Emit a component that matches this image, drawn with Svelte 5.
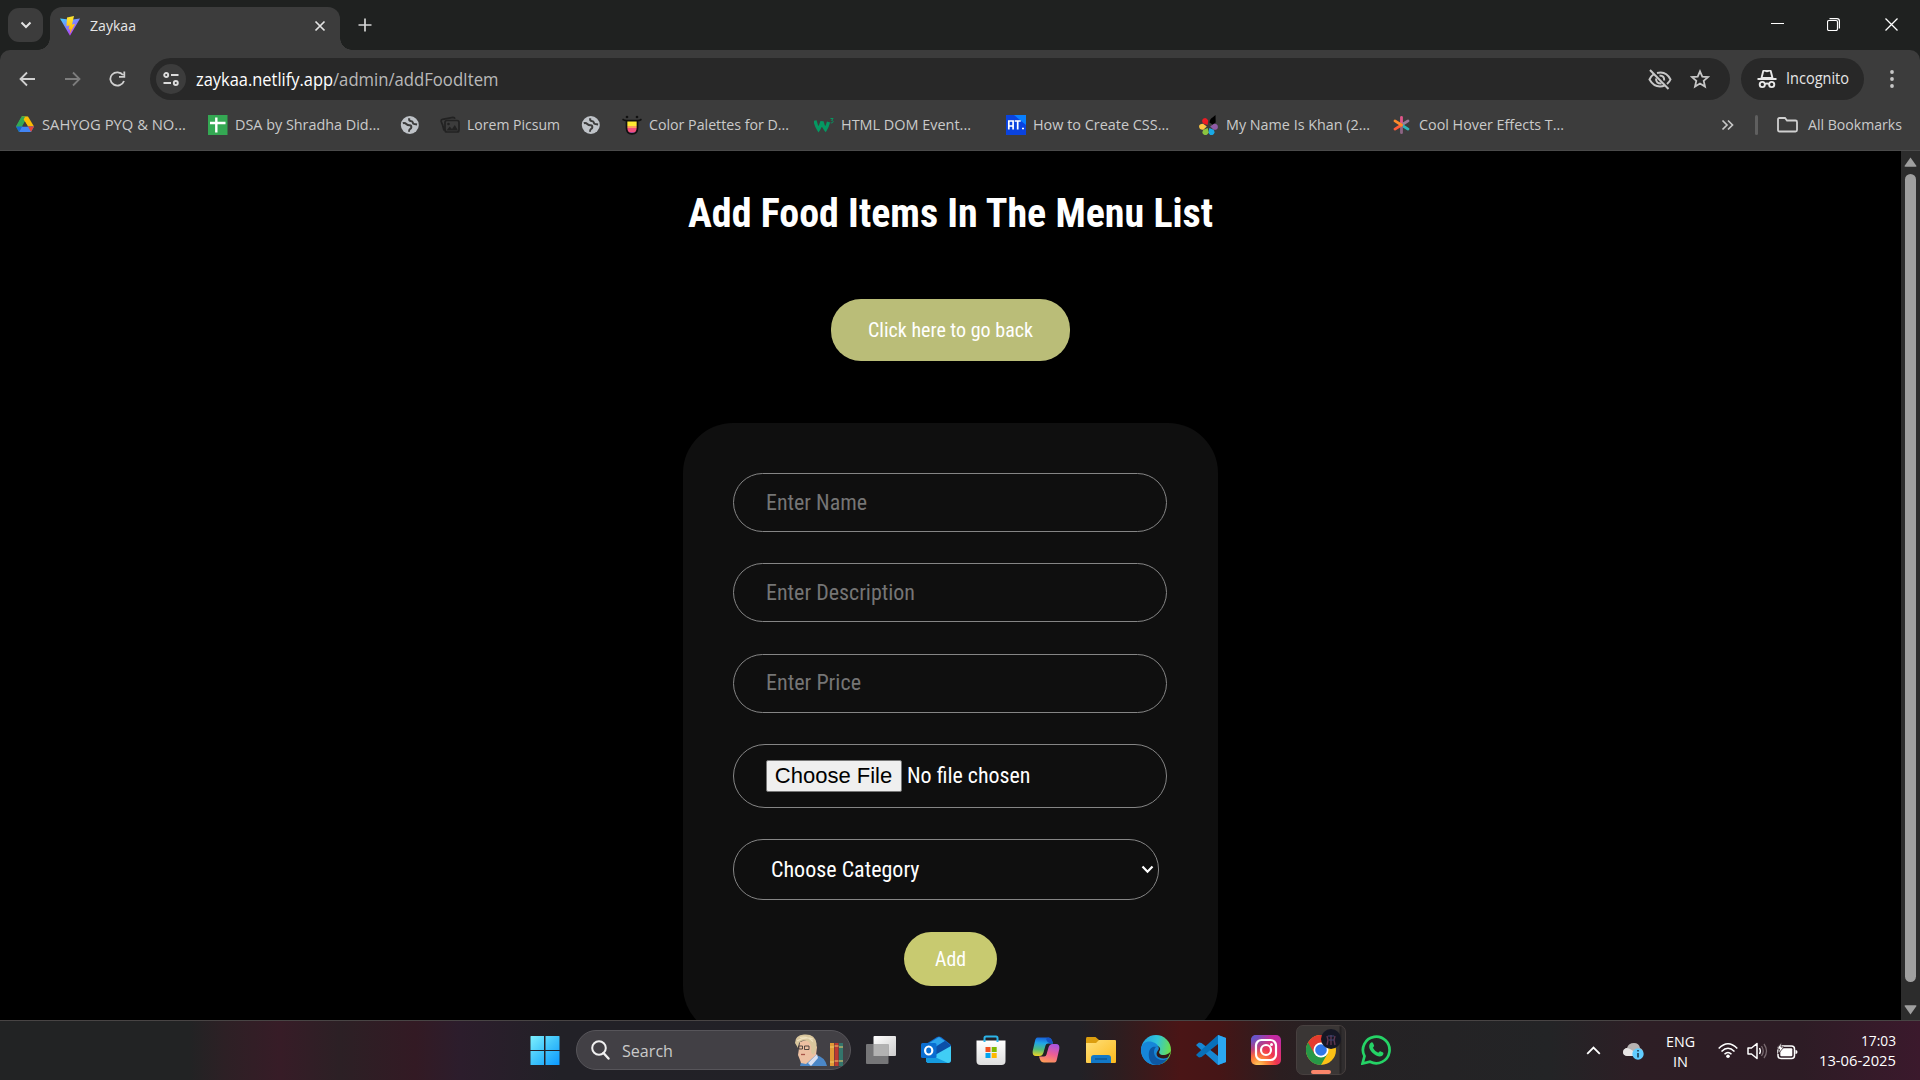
<script>
  const bookmarks = [
    { icon: 'drive', label: 'SAHYOG PYQ & NO...', w: 144 },
    { icon: 'sheet', label: 'DSA by Shradha Did...', w: 145 },
    { icon: 'globe' },
    { icon: 'picsum', label: 'Lorem Picsum', w: 93 },
    { icon: 'globe' },
    { icon: 'palette', label: 'Color Palettes for D...', w: 140 },
    { icon: 'w3', label: 'HTML DOM Event...', w: 130 },
    { icon: 'at', label: 'How to Create CSS...', w: 136 },
    { icon: 'petals', label: 'My Name Is Khan (2...', w: 144 },
    { icon: 'burst', label: 'Cool Hover Effects T...', w: 145 }
  ];
  const fields = [
    { label: 'Enter Name', w: 101 },
    { label: 'Enter Description', w: 149 },
    { label: 'Enter Price', w: 95 }
  ];
  const apps = ['start', 'search', 'taskview', 'outlook', 'store', 'copilot', 'files', 'edge', 'code', 'insta', 'chrome', 'whatsapp'];
  const petals = [
    { angle: 93, color: '#8e5ba6' },
    { angle: 152, color: '#19a9e5' },
    { angle: 208, color: '#8bc53f' },
    { angle: 268, color: '#ffc845' },
    { angle: 328, color: '#ed1c24' }
  ];
  const rays = [
    { angle: 0, color: '#e0568a' },
    { angle: 58, color: '#9a7b9c' },
    { angle: 122, color: '#2fb3b8' },
    { angle: 180, color: '#8d6484' },
    { angle: 238, color: '#ff5b3a' },
    { angle: 302, color: '#ff8a2a' }
  ];
</script>

{#snippet fit(text, w, size, h, base, kind)}
  <svg class="fit {kind}" width={w} height={h} viewBox="0 0 {w} {h}">
    <text x="0" y={base} font-size={size} textLength={w} lengthAdjust="spacingAndGlyphs">{text}</text>
  </svg>
{/snippet}

{#snippet bookmarkIcon(name)}
  <svg width="20" height="20" viewBox="0 0 20 20">
    {#if name === 'drive'}
      <path d="M6.700 1.500L1 11.500 4 17l8.600-15.500z" fill="#34a853" />
      <path d="M6.700 1.500h6.300l6 10h-6z" fill="#fbbc04" />
      <path d="M6.700 1.500h3.500L4 13l-3-1.500z" fill="#34a853" />
      <path d="M6.700 11.500H19L16 17H4z" fill="#4285f4" />
      <path d="M1 11.500h6.100L4 17z" fill="#1967d2" /><path d="M13 11.500h6L16 17z" fill="#ea4335" />
      <path d="M10 7l2.700 4.500H7.300z" fill="#3c3c3c" />
    {:else if name === 'sheet'}
      <path d="M0 0h19.500v20H0z" fill="#34a853" /><path d="M8.300 2.500v15M2 8h15.500" stroke="#fff" stroke-width="2.400" />
    {:else if name === 'globe'}
      <circle cx="9.800" cy="10" r="9" fill="#bfc3c8" />
      <path d="M2.800 8.200q2-.7 3.800 1 1.200 1.300 3.200 1.100 1.600.1 1.500 2-.1 1.300-1.300 1.700-.9.500-1 2.700" fill="none" stroke="#3c3c3c" stroke-width="2" />
      <path d="M9.300 3.200q-.6 2.400 1.200 2.900 2.100.2 2.300 1.300 0 1.500 1.500 1.700l2.800.3" fill="none" stroke="#3c3c3c" stroke-width="2" />
    {:else if name === 'picsum'}
      <g fill="none" stroke="#222" stroke-width="1.700"><rect x="5" y="5.500" width="14" height="11.500" rx="2" /><path d="M4.500 15L1.200 6.500Q.8 4.800 2.500 4.300L13 2.300q1.500 0 2 1.500M2.500 9.500l1.500 6" /></g>
      <path d="M6.500 15.500l3.200-4 2.300 2.500 2.800-4 3.200 5.500z" fill="#222" /><circle cx="8.500" cy="9" r="1.300" fill="#222" />
    {:else if name === 'palette'}
      <path d="M4.500 6h11v7c0 4-2 5.500-5.500 5.500S4.500 17 4.500 13z" fill="#ffea32" /><path d="M4.500 11h11v3h-11z" fill="#ff9d5c" /><path d="M4.500 13h11q0 5.500-5.500 5.500T4.500 13z" fill="#f3517d" /><path d="M6.500 17h7l-3.500 2z" fill="#a14ba0" />
      <path d="M.5 4.200q2 1.300 4 1.400h11q2 0 4-1.400M4.500 5.600V13c0 4 2 5.800 5.500 5.800s5.500-1.800 5.500-5.800V5.600" fill="none" stroke="#111" stroke-width="1.700" /><circle cx="5" cy="2" r="1.300" fill="#111" /><circle cx="15" cy="2" r="1.300" fill="#111" />
    {:else if name === 'w3'}
      <path d="M1 5.500q1 5 3.500 9 2-3 3.500-8 1 5 3.500 8 2-3.500 3-7.500" fill="none" stroke="#059862" stroke-width="3.200" />
      <path d="M16.500 3.500h2.600l-1.500 1.900c2.300.1 2 3-.9 2.400" fill="none" stroke="#059862" stroke-width="1" />
    {:else if name === 'at'}
      <rect width="20" height="20" fill="#0a43df" /><path d="M8 0h12v10z" fill="#087fff" />
      <path d="M2.800 14.500V6h4.300v8.500M2.800 11h4.300M8.700 6h6M11.700 6v8.500M16 13.500h2" stroke="#fff" stroke-width="1.700" fill="none" />
    {:else if name === 'petals'}
      {#each petals as p}
        <path d="M9.500 9.800L6.500 6.200Q6.300 2.300 9.500 2.100T12.500 6.200z" fill={p.color} transform="rotate({p.angle} 9.500 11.500)" />
      {/each}
      <path d="M10.500 7.500q.5-4 3-5l3-2.500.2 7.500-3.200 2z" fill="#000" />
    {:else}
      {#each rays as r}
        <path d="M9.500 10V2.300" stroke={r.color} stroke-width="2.800" stroke-linecap="round" transform="rotate({r.angle} 9.500 10)" />
      {/each}
    {/if}
  </svg>
{/snippet}

{#snippet appIcon(name)}
  <svg width="30" height="30" viewBox="0 0 30 30">
    {#if name === 'start'}
      <path d="M.5 1.500q0-.5.500-.5H14v14H.500zM15.500 1H29q.5 0 .5.500V15h-14zM.5 16H14v14H1q-.5 0-.5-.500zM15.500 16h14v13.500q0 .5-.5.500H15.500z" fill="url(#gStart)" />
    {:else if name === 'taskview'}
      <rect x="7.500" y="1" width="22.500" height="20" rx="1" fill="url(#gView)" /><rect y="9" width="22.500" height="20" rx="1" fill="#767678" /><path d="M7.500 9h15v12h-15z" fill="#b2b2b2" />
    {:else if name === 'outlook'}
      <path d="M5 9L16 2q2-1 4 0l9 7q1 .8 1 2v14q0 3-3 3H8q-3 0-3-3z" fill="#1266c9" />
      <path d="M5 10l13-8 6 4L9 15z" fill="#2ba4ec" /><path d="M10 15l14-9 6 5-15 10z" fill="#0b4fa8" /><path d="M14 20l16-9v14q0 3-3 3H8q-2 0-3-2z" fill="#40cdf5" /><path d="M5 18l22 10H8q-3 0-3-3z" fill="#159bdf" />
      <rect y="8" width="15.500" height="15" rx="1.500" fill="#0a6ed1" /><ellipse cx="7.700" cy="15.500" rx="3.600" ry="4" fill="none" stroke="#fff" stroke-width="2.200" />
    {:else if name === 'store'}
      <path d="M.5 5.500h29V26q0 4-4 4h-21q-4 0-4-4z" fill="url(#gStore)" /><path d="M8.500 7V3q0-1.500 1.500-1.500h10q1.500 0 1.500 1.500v4" fill="none" stroke="#2cb5e9" stroke-width="2" />
      <path d="M9.500 12h5v5h-5z" fill="#f25022" /><path d="M15.700 12h5v5h-5z" fill="#7fba00" /><path d="M9.500 18h5v5h-5z" fill="#00a4ef" /><path d="M15.700 18h5v5h-5z" fill="#ffb900" />
    {:else if name === 'copilot'}
      <path d="M6.500 2.500H17q3 0 4 3l1 3h-5q-2 0-2.500 2l-2 7q-1 3.500-4 3.500H5q-4 0-3.300-5L4 6q.6-3.500 2.500-3.500z" fill="url(#gCopA)" />
      <path d="M23.500 27.500H13q-3 0-4-3l-1-3h5q2 0 2.500-2l2-7q1-3.500 4-3.500H25q4 0 3.300 5L26 24q-.6 3.500-2.500 3.500z" fill="url(#gCopB)" />
      <path d="M17 2.500q3 0 4 3l1 3h-3q-3-1-4-4.500z" fill="#1554c4" />
    {:else if name === 'files'}
      <path d="M0 4q0-2 1-2h8.500l3.500 3v5H0z" fill="#dc9e0f" /><path d="M0 8h10l3-3h16q1 0 1 1v21q0 1-1 1H1q-1 0-1-1z" fill="url(#gFolder)" />
      <path d="M5 28v-5q0-3 3-3h14q3 0 3 3v5z" fill="#1278c7" /><path d="M9 24h12" stroke="#0b5797" stroke-width="1.500" />
    {:else if name === 'edge'}
      <circle cx="15" cy="15" r="15" fill="url(#gEdgeA)" />
      <path d="M0 14C1 6 9 5 14 8c4 2.500 5 6 2.500 8-3 3 .5 8 6.500 7 2-.3 3.500-1 4.800-1.500C24 28 19 30 14.500 30 6 30 0 23 0 14z" fill="#1686d8" />
      <path d="M8 17c1-5 5-6 7-5-4 4-2 12 6 13 2.500.2 4-.5 5.500-1.500C23 29 17 31 13 29.500 9 28 7 22 8 17z" fill="#0d57a3" />
      <path d="M16.500 16c2.500-2.500 1-5-1.500-5 4 0 5 3 3.500 5-1 1.500 0 4 3.500 4 4 0 7-2 7.700-4-.7 3-1.500 5-2.900 6.500-7 3-14-1.500-10.300-6.500z" fill="#341719" />
    {:else if name === 'code'}
      <path d="M22 0l8 3v24l-8 3L2.500 12.500 0 10l3-2.500 2.500.5L22 21z" fill="#1687d4" /><path d="M22 0v9L5.500 22 3 22.500 0 20l2.500-2.500z" fill="#0870b9" /><path d="M22 0l8 3v24l-8 3z" fill="#2ba7f3" />
    {:else if name === 'insta'}
      <rect width="30" height="30" rx="5" fill="url(#gInsta)" /><rect width="30" height="30" rx="5" fill="url(#gInstaB)" />
      <rect x="5" y="5" width="20" height="20" rx="5.500" fill="none" stroke="#fff" stroke-width="2.200" /><circle cx="15" cy="15" r="5" fill="none" stroke="#fff" stroke-width="2.200" /><circle cx="20.500" cy="9.500" r="1.500" fill="#fff" />
    {:else if name === 'chrome'}
      <circle cx="15" cy="15" r="15" fill="#fbc116" /><path d="M15 15L2 7.500A15 15 0 0 0 15 30l6.500-11.300z" fill="#279847" /><path d="M2 7.500A15 15 0 0 1 28 7.500H15L8.500 18.700z" fill="#e33b2e" />
      <circle cx="15" cy="15" r="7.500" fill="#fff" /><circle cx="15" cy="15" r="5.800" fill="#3077e8" />
    {:else}
      <path d="M1.500 28.500l2-7.300A13.300 13.300 0 1 1 9 26.700z" fill="none" stroke="#25d366" stroke-width="2.700" />
      <path d="M9.500 8c1-1 2-.9 2.500.1l1.100 2.500c.2.700-.6 1.500-1.200 2.200 1.200 2.300 2.900 3.900 5.400 5 .7-.8 1.300-1.800 2-1.600l2.800 1.400c.8.500.1 2.700-1.300 3.400-2.400 1.300-6.300-.3-9.400-3.300S7 10.500 9.500 8z" fill="#25d366" />
    {/if}
  </svg>
{/snippet}

<svg class="defs" width="0" height="0">
  <defs>
    <linearGradient id="gStart" gradientUnits="userSpaceOnUse" x1="0" y1="0" x2="30" y2="30"><stop offset="0" stop-color="#80f2ff" /><stop offset=".5" stop-color="#40c4fa" /><stop offset="1" stop-color="#0a98ff" /></linearGradient>
    <linearGradient id="gView" x1="0" y1="0" x2="1" y2="1"><stop offset="0" stop-color="#fff" /><stop offset="1" stop-color="#ccc" /></linearGradient>
    <linearGradient id="gStore" x1="0" y1="0" x2="0" y2="1"><stop offset="0" stop-color="#fff" /><stop offset="1" stop-color="#dedede" /></linearGradient>
    <linearGradient id="gCopA" x1=".4" y1="0" x2=".3" y2="1"><stop offset="0" stop-color="#1762da" /><stop offset=".3" stop-color="#20a5e8" /><stop offset=".65" stop-color="#51bd79" /><stop offset="1" stop-color="#edd325" /></linearGradient>
    <linearGradient id="gCopB" x1=".6" y1="0" x2=".3" y2="1"><stop offset="0" stop-color="#aa54df" /><stop offset=".5" stop-color="#ed5e94" /><stop offset="1" stop-color="#ff9c55" /></linearGradient>
    <linearGradient id="gFolder" x1="0" y1="0" x2="1" y2="1"><stop offset="0" stop-color="#ffe07a" /><stop offset="1" stop-color="#fcb91c" /></linearGradient>
    <linearGradient id="gEdgeA" x1="0" y1=".3" x2="1" y2=".5"><stop offset="0" stop-color="#209fe0" /><stop offset=".5" stop-color="#31c5d8" /><stop offset="1" stop-color="#6fe044" /></linearGradient>
    <radialGradient id="gInsta" cx=".25" cy="1.050" r="1.100"><stop offset="0" stop-color="#ffd766" /><stop offset=".25" stop-color="#fd8a3a" /><stop offset=".55" stop-color="#f0354f" /><stop offset="1" stop-color="#c32aa3" /></radialGradient>
    <radialGradient id="gInstaB" cx="0" cy="0" r=".7"><stop offset="0" stop-color="#4c5fd7" /><stop offset="1" stop-color="#4c5fd7" stop-opacity="0" /></radialGradient>
    <linearGradient id="gViteA" x1="0" y1="0" x2=".6" y2="1"><stop offset="0" stop-color="#41d1ff" /><stop offset="1" stop-color="#bd34fe" /></linearGradient>
    <linearGradient id="gViteB" x1="0" y1="0" x2="0" y2="1"><stop offset="0" stop-color="#ffea32" /><stop offset="1" stop-color="#ffa800" /></linearGradient>
  </defs>
</svg>

<div class="screen">
  <header class="tabstrip">
    <button class="tabsearch" aria-label="Search tabs"><svg width="12" height="8" viewBox="0 0 12 8"><path d="M1.500 1.500L6 6l4.500-4.500" fill="none" stroke="#e3e3e3" stroke-width="2" /></svg></button>
    <div class="tab">
      <svg width="20" height="20" viewBox="0 0 20 20"><path d="M0 2.500l10 17.200L20 2.500l-9 1.200z" fill="url(#gViteA)" /><path d="M14 0L7 1.500 6.500 10l3-.500-1 4 2-.5-.8 5L15 8l-3 .500z" fill="url(#gViteB)" /></svg>
      {@render fit('Zaykaa', 46, 15, 22, 16, 'ui bright')}
      <svg class="x" width="12" height="12" viewBox="0 0 12 12"><path d="M1.500 1.500l9 9M10.500 1.500l-9 9" stroke="#e3e3e3" stroke-width="1.700" /></svg>
    </div>
    <svg class="plus" width="14" height="14" viewBox="0 0 14 14"><path d="M7 .5v13M.5 7h13" stroke="#d5d5d5" stroke-width="1.700" /></svg>
    <div class="wincontrols">
      <svg width="13" height="13" viewBox="0 0 13 13"><path d="M0 5.500h13" stroke="#fff" /></svg>
      <svg width="13" height="13" viewBox="0 0 13 13"><rect x=".5" y="2.500" width="10" height="10" rx="1.500" fill="none" stroke="#fff" stroke-width="1.200" /><path d="M2.500.6H10Q12.400.6 12.400 3v7.500" fill="none" stroke="#fff" stroke-width="1.200" /></svg>
      <svg width="13" height="13" viewBox="0 0 13 13"><path d="M.5.5l12 12M12.500.5l-12 12" stroke="#fff" stroke-width="1.300" /></svg>
    </div>
  </header>

  <div class="chrome">
    <div class="toolbar">
      <svg width="17" height="16" viewBox="0 0 17 16"><path d="M16 8H2M8 1.500L1.500 8 8 14.500" fill="none" stroke="#d0d0d0" stroke-width="1.800" /></svg>
      <svg width="17" height="16" viewBox="0 0 17 16"><path d="M1 8h14M9 1.500L15.500 8 9 14.500" fill="none" stroke="#7d7d7d" stroke-width="1.800" /></svg>
      <svg width="17" height="16" viewBox="0 0 17 16"><path d="M15 10A7 6.600 0 1 1 14 4M15.300.5v5.300H10" fill="none" stroke="#d0d0d0" stroke-width="1.800" /></svg>
      <div class="omnibox">
        <span class="site"><svg width="16" height="14" viewBox="0 0 16 14"><g fill="none" stroke="#dcdcdc" stroke-width="1.900"><circle cx="3.200" cy="3" r="2" /><path d="M8 3h7.500M.5 11H8" /><circle cx="12.800" cy="11" r="2" /></g></svg></span>
        <div class="url">{@render fit('zaykaa.netlify.app', 137, 18, 28, 20.500, 'ui white')}{@render fit('/admin/addFoodItem', 165.500, 18, 28, 20.500, 'ui grey')}</div>
        <svg width="24" height="21" viewBox="0 0 24 21"><g fill="none" stroke="#c7c7c7" stroke-width="2"><path d="M6 5Q3 7 1.500 10.500q4 7 10.500 7 2.500 0 4.500-1M9 4q9-2.500 13.500 6.500-1 2.500-3.500 4.500M8 9.500Q8 15 13.500 14.500M11.500 6.500q5 0 4.700 5" /><path d="M2 1l18.500 19" /></g></svg>
        <svg width="20" height="20" viewBox="0 0 20 20"><path d="M10 2.300l2.300 5.300 5.700.5-4.300 3.800 1.300 5.700-5-3-5 3 1.300-5.700L2 8.100l5.700-.5z" fill="none" stroke="#c7c7c7" stroke-width="1.800" /></svg>
      </div>
      <div class="incognito">
        <svg width="20" height="19" viewBox="0 0 20 19"><path d="M4.500 8l1.700-6.700q.3-1 1.300-.8l2.500.7 2.500-.7q1-.2 1.300.8L15.500 8z" fill="none" stroke="#e8e8e8" stroke-width="1.900" /><path d="M.5 9h19" stroke="#e8e8e8" stroke-width="2" /><g fill="none" stroke="#e8e8e8" stroke-width="1.900"><circle cx="5.300" cy="14.500" r="2.600" /><circle cx="14.700" cy="14.500" r="2.600" /><path d="M8 14q2-1 4 0" /></g></svg>
        {@render fit('Incognito', 63, 15.500, 22, 16, 'ui bright')}
      </div>
      <svg width="4" height="18" viewBox="0 0 4 18"><g fill="#c7c7c7"><circle cx="2" cy="2" r="1.900" /><circle cx="2" cy="9" r="1.900" /><circle cx="2" cy="16" r="1.900" /></g></svg>
    </div>
    <nav class="bookmarks">
      <div class="slots">
        {#each bookmarks as b}
          <div class="bookmark">{@render bookmarkIcon(b.icon)}{#if b.label}{@render fit(b.label, b.w, 15, 22, 16, 'ui soft')}{/if}</div>
        {/each}
      </div>
      <div class="all">
        <svg width="13" height="12" viewBox="0 0 13 12"><path d="M1.500 1.500L6 6l-4.500 4.500M7 1.500L11.500 6 7 10.500" fill="none" stroke="#c7c7c7" stroke-width="1.700" /></svg>
        <i></i>
        <svg width="21" height="16" viewBox="0 0 21 16"><path d="M1 13V2.500Q1 1 2.500 1H8l2 2.500h8.500Q20 3.500 20 5v8q0 1.500-1.500 1.500h-16Q1 14.500 1 13z" fill="none" stroke="#d0d0d0" stroke-width="1.800" /></svg>
        {@render fit('All Bookmarks', 94, 15, 22, 16, 'ui soft')}
      </div>
    </nav>
  </div>

  <div class="viewport">
    <main>
      <h1>{@render fit('Add Food Items In The Menu List', 525, 40, 50, 38, 'cond bold')}</h1>
      <button class="back">{@render fit('Click here to go back', 165, 20, 26, 20, 'cond white label')}</button>
      <form>
        {#each fields as f}
          <div class="field">{@render fit(f.label, f.w, 22.500, 30, 22, 'cond placeholder')}</div>
        {/each}
        <div class="field file"><span class="choose">Choose File</span>{@render fit('No file chosen', 123.500, 22.500, 30, 22, 'cond white label')}</div>
        <div class="field select">{@render fit('Choose Category', 148.500, 22.500, 30, 22, 'cond white label')}<svg width="13" height="9" viewBox="0 0 13 9"><path d="M1.500 1.500L6.500 6.700l5-5.200" fill="none" stroke="#fff" stroke-width="2.200" /></svg></div>
        <button class="add" type="button">{@render fit('Add', 31, 20, 26, 19.500, 'cond white label')}</button>
      </form>
    </main>
    <aside class="scroll">
      <svg width="13" height="10" viewBox="0 0 13 10"><path d="M6.500.5L12.500 9q0 .8-.8.8H1.300Q.5 9.800.5 9z" fill="#9f9f9f" /></svg>
      <div class="thumb"></div>
      <svg width="13" height="10" viewBox="0 0 13 10"><path d="M6.500 9.500L12.500 1q0-.8-.8-.8H1.300Q.5.200.5 1z" fill="#9f9f9f" /></svg>
    </aside>
  </div>

  <footer>
    <div class="apps">
      {#each apps as a}
        {#if a === 'search'}
          <div class="searchbox">
            <svg width="19" height="20" viewBox="0 0 19 20"><circle cx="8" cy="8" r="6.800" fill="none" stroke="#f0f0f0" stroke-width="2" /><path d="M12.500 13l5 5.500" stroke="#f0f0f0" stroke-width="2.400" stroke-linecap="round" /></svg>
            {@render fit('Search', 51, 17, 24, 18.500, 'ui soft')}
            <svg class="person" width="50" height="33" viewBox="0 0 50 33">
              <path d="M6 32l1-4q6-1 10-3l5-4q9 2 11 11z" fill="#4b87c7" />
              <path d="M6 8q6-3 13-1l4 6-1 8-10 9-5-1-1-3-2-5z" fill="#edc0a2" />
              <path d="M14 29l9-9 1 4-7 8z" fill="#d9dff0" />
              <path d="M1 9Q1 1 10 .500q11-1 12.500 9 .5 6-2.500 11-3 0-3-4 1-6-3-9Q8 5 5 9l-1 5z" fill="#d9c69d" /><path d="M3 7q8-5 16-2M6 3.500q7-2 13 4" stroke="#f0e2c0" stroke-width="1.200" fill="none" />
              <path d="M4.500 12h4v3h-3.500zM10.500 12H15v3.500h-4.500z" stroke="#423936" fill="none" stroke-width=".9" /><path d="M7 20.500h4" stroke="#a85549" stroke-width="1.300" />
              <path d="M36 9h4v23h-4z" fill="#e19a36" /><path d="M40.500 9h4v23h-4z" fill="#bd3830" /><path d="M45 9h4v23h-4z" fill="#34756c" /><path d="M36 13h4M36 28h4M40.500 12h4M40.500 27h4M45 13h4M45 27h4" stroke="#f2ca6a" />
            </svg>
          </div>
        {:else if a === 'chrome'}
          <div class="app active">{@render appIcon(a)}<span class="avatar"><svg width="20" height="20" viewBox="0 0 20 20"><circle cx="10" cy="10" r="10" fill="#151724" /><path d="M6 7l1 4-1 5M10 6v10M14 7l-1 4 1 5" stroke="#5f3650" stroke-width="1.400" fill="none" /><path d="M7 7h6M8 11h5" stroke="#3a4574" /></svg></span><b></b></div>
        {:else}
          <div class="app">{@render appIcon(a)}</div>
        {/if}
      {/each}
    </div>
    <div class="tray">
      <svg width="15" height="9" viewBox="0 0 15 9"><path d="M1.200 7.800L7.500 1.500l6.300 6.300" fill="none" stroke="#fff" stroke-width="1.800" /></svg>
      <svg class="cloud" width="21" height="18" viewBox="0 0 21 18"><path d="M4 14q-4-.5-4-4t4-4q1.500-5 7-5 5 0 6 5 3 1 3 5l-3 3z" fill="#b7b3b2" /><path d="M4 14q-4-.5-4-4 0-2 3-4 4 0 8 4v4z" fill="#e7e5e4" /><circle cx="15" cy="12" r="5.700" fill="#60cdff" /><path d="M15 11v4.500M15 8v1.500" stroke="#173547" stroke-width="1.500" /></svg>
      <div class="lang">{@render fit('ENG', 29, 15, 20, 15.500, 'ui white')}{@render fit('IN', 15, 15, 20, 15.500, 'ui white')}</div>
      <svg width="20" height="17" viewBox="0 0 20 17"><g fill="none" stroke="#fff" stroke-width="1.500"><path d="M.7 6.500q9.300-9.500 18.600 0M3.500 9.500q6.500-6.500 13 0M6.500 12.300q3.500-3.500 7 0" /></g><circle cx="10" cy="14.300" r="1.800" fill="#fff" /></svg>
      <svg width="21" height="18" viewBox="0 0 21 18"><path d="M1 6v6h3.500L10 16.500v-15L4.500 6z" fill="none" stroke="#fff" stroke-width="1.500" stroke-linejoin="round" /><path d="M12.500 6q1.700 3 0 6" stroke="#fff" stroke-width="1.400" fill="none" /><path d="M14.500 4q3.500 5 0 10M17 2q5 7 0 14" stroke="#796a70" stroke-width="1.300" fill="none" /></svg>
      <svg width="21" height="18" viewBox="0 0 21 18"><rect x="1" y="4" width="16.500" height="12.500" rx="3" fill="none" stroke="#fff" stroke-width="1.500" /><rect x="3.300" y="6.300" width="12" height="8" rx="1" fill="#fff" /><path d="M18.500 8q2 0 2 2t-2 2z" fill="#fff" /><path d="M4.500 0L0 7h2.500L1 12l6-7H4z" fill="#fff" stroke="#2d1d25" stroke-width=".8" /></svg>
      <div class="clock">{@render fit('17:03', 35, 15, 20, 14.500, 'ui white')}{@render fit('13-06-2025', 77, 15, 20, 14.500, 'ui white')}</div>
    </div>
  </footer>
</div>

<style>
  :global(body) { margin: 0; background: #000; overflow: hidden; }
  * { box-sizing: border-box; }
  svg { display: block; flex: none; }
  button { border: 0; padding: 0; margin: 0; }
  .defs { position: absolute; }
  .screen { width: 1920px; height: 1080px; display: flex; flex-direction: column; overflow: hidden; background: linear-gradient(#1f2120 70px, #000 70px); }
  .fit { overflow: visible; }
  .ui { font-family: 'Open Sans', 'Noto Sans', sans-serif; fill: #c7c7c7; }
  .bright { fill: #e6e6e6; }
  .white { fill: #fff; }
  .grey { fill: #b9b9b9; }
  .soft { fill: #cacaca; }
  .cond { font-family: 'Roboto Condensed', Roboto, sans-serif; font-stretch: 75%; }
  .label { font-weight: 450; }
  .bold { font-weight: 700; fill: #fff; }
  .placeholder { fill: #757575; }

  .tabstrip { height: 50px; flex: none; background: #1f2120; display: flex; padding-left: 8px; }
  .tabsearch { width: 35px; height: 34px; margin-top: 8px; border-radius: 11px; background: #3c3c3c; display: grid; place-items: center; }
  .tab { width: 290px; height: 43px; margin: 7px 0 0 7px; padding: 0 14px 6px 10px; border-radius: 12px 12px 0 0; background: #3c3c3c; display: flex; align-items: center; gap: 9.500px; position: relative; }
  .tab::before, .tab::after { content: ''; position: absolute; bottom: 0; width: 12px; height: 12px; }
  .tab::before { left: -12px; background: radial-gradient(circle at 0 0, transparent 11.500px, #3c3c3c 12px); }
  .tab::after { right: -12px; background: radial-gradient(circle at 100% 0, transparent 11.500px, #3c3c3c 12px); }
  .x { margin-left: auto; }
  .plus { margin: 18px 0 0 18px; }
  .wincontrols { margin: 18px 22px 0 auto; display: grid; grid-template-columns: 56px 58px 13px; }
  .chrome { height: 101px; flex: none; background: #3c3c3c; border-bottom: 1px solid #4a4a4a; border-radius: 10px 10px 0 0; }
  .toolbar { height: 58px; padding: 0 25px 0 19px; display: flex; align-items: center; gap: 28px; }
  .omnibox { width: 1580px; height: 42px; margin-left: -4px; padding: 0 20px 0 6px; border-radius: 21px; background: #282828; display: flex; align-items: center; gap: 18px; }
  .site { width: 30px; height: 30px; border-radius: 15px; background: #3c3c3c; display: grid; place-items: center; }
  .url { display: flex; margin: 0 auto 0 -8px; }
  .incognito { width: 123px; height: 42px; margin: 0 -2px 0 -17px; padding-left: 16px; border-radius: 21px; background: #282828; display: flex; align-items: center; gap: 9px; }
  .bookmarks { height: 34px; padding: 0 18px 0 15px; display: flex; align-items: center; justify-content: space-between; }
  .slots { display: grid; grid-template-columns: 193px 192px 40px 141px 41px 192px 192px 193px 193px 180px; }
  .bookmark { display: flex; align-items: center; gap: 7px; }
  .all { display: flex; align-items: center; }
  .all i { width: 3px; height: 20px; margin: 0 19px 0 21px; border-radius: 2px; background: #5f5f5f; }
  .all .fit { margin-left: 10px; }

  .viewport { height: 869px; flex: none; display: flex; overflow: hidden; background: #000; }
  main { flex: 1; display: flex; flex-direction: column; align-items: center; }
  h1 { margin: 38px 0 0; height: 50px; flex: none; }
  .back { width: 239px; height: 62px; flex: none; margin-top: 60px; border-radius: 30px; background: #babd78; display: grid; place-items: center; }
  form { width: 535px; height: 613px; flex: none; margin-top: 62px; padding: 50px; border-radius: 50px; background: #0f0f0f; display: flex; flex-direction: column; }
  .field { width: 434px; height: 59px; flex: none; margin-bottom: 31.350px; padding: 0 32px 0 31.500px; border: 1px solid #858585; border-radius: 30px; display: flex; align-items: center; }
  .file { height: 64px; border-radius: 32px; }
  .choose { width: 136px; height: 32px; margin-right: 5px; border: 1px solid #767676; border-radius: 2px; background: #efefef; color: #000; display: grid; place-items: center; font: 22px/28px 'Liberation Sans', Arial, sans-serif; }
  .select { width: 426px; height: 61px; padding: 0 4px 0 36.500px; justify-content: space-between; }
  .add { width: 93px; height: 54px; flex: none; align-self: center; border-radius: 27px; background: #c8ca70; display: grid; place-items: center; }
  .scroll { width: 19px; background: #2c2c2c; display: flex; flex-direction: column; align-items: center; padding: 6px 0 5px; }
  .thumb { width: 11px; flex: 1; margin: 7px 0 23px; border-radius: 6px; background: #9f9f9f; }

  footer { height: 60px; flex: none; border-top: 1px solid #484444; display: flex; justify-content: space-between; align-items: center; padding: 0 24px 0 517px;
    background: linear-gradient(90deg, #222324 0, #222324 190px, #2d2025 225px, #371c27 280px, #2c2025 340px, #331a24 415px, #2c1d2c 460px, #222127 560px, #222126 1080px, #2e1d1f 1120px, #4a1516 1180px, #451516 1220px, #2b1e20 1280px, #252224 1340px, #232426 1550px, #2d1e25 1640px, #2d1c25 1800px, #3b192c 1920px); }
  .apps { display: flex; align-items: center; padding-bottom: 1px; }
  .app { width: 55px; height: 50px; display: grid; place-items: center; }
  .searchbox { width: 275px; height: 40px; margin: 0 2px 0 4px; padding: 0 6px 0 14px; border: 1px solid #57555a; border-radius: 20px; background: #424045; display: flex; align-items: center; gap: 12px; }
  .person { margin-left: auto; }
  .active { position: relative; width: 50px; margin-right: 2px; border: 1px solid #47403f; border-radius: 7px; background: linear-gradient(90deg, #3a3635 42px, #252223 43px, #252223 44px, #302d2e 45px); }
  .app:has(+ .active) { margin-right: 3px; }
  .active > svg { margin-right: 1px; }
  .active .avatar { position: absolute; right: 4px; top: 3px; }
  .active b { position: absolute; left: 14px; bottom: 0; width: 20px; height: 4px; border-radius: 2px; background: #fa866b; }
  .tray { display: flex; align-items: center; }
  .cloud { margin-left: 22px; }
  .lang { width: 29px; margin: 0 23px 0 22px; display: flex; flex-direction: column; align-items: center; }
  .tray > svg + svg:not(.cloud) { margin-left: 9px; }
  .clock { width: 98px; display: flex; flex-direction: column; align-items: flex-end; }
</style>
